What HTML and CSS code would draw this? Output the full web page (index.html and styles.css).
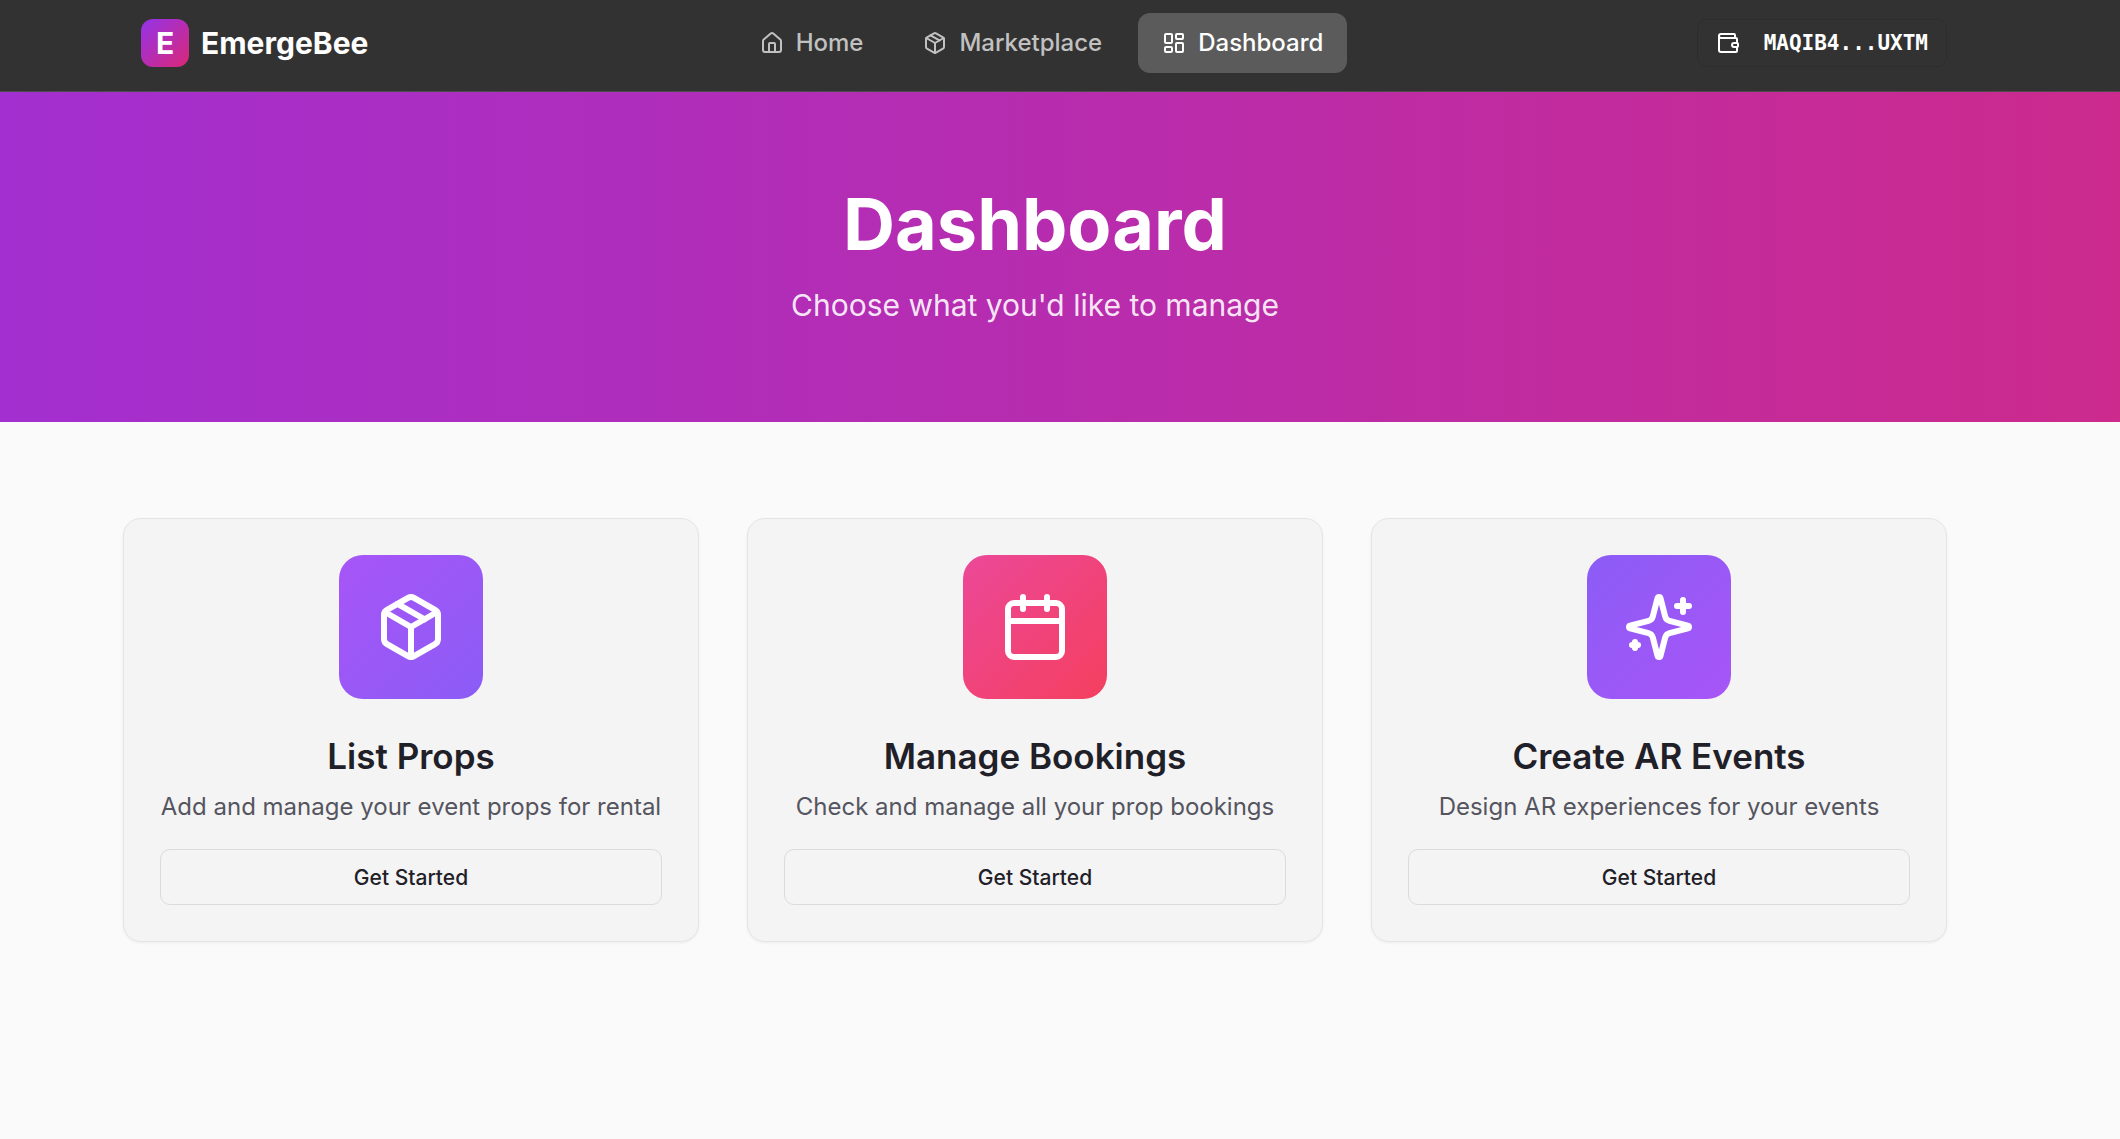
FILE: index.html
```html
<!DOCTYPE html>
<html lang="en">
<head>
<meta charset="utf-8">
<meta name="viewport" content="width=device-width, initial-scale=1">
<title>Dashboard - EmergeBee</title>
<link rel="stylesheet" href="styles.css">
</head>
<body>
<header class="site-header">
  <div class="container header-bar">
    <a class="brand" href="#">
      <span class="brand-mark">E</span>
      <span class="brand-name">EmergeBee</span>
    </a>
    <nav class="main-nav" aria-label="Main">
      <a class="nav-link" href="#">
        <svg class="icon" viewBox="0 0 24 24" aria-hidden="true"><path d="M15 21v-8a1 1 0 0 0-1-1h-4a1 1 0 0 0-1 1v8"/><path d="M3 10a2 2 0 0 1 .709-1.528l7-5.999a2 2 0 0 1 2.582 0l7 5.999A2 2 0 0 1 21 10v9a2 2 0 0 1-2 2H5a2 2 0 0 1-2-2z"/></svg>
        Home
      </a>
      <a class="nav-link" href="#">
        <svg class="icon" viewBox="0 0 24 24" aria-hidden="true"><path d="M11 21.73a2 2 0 0 0 2 0l7-4A2 2 0 0 0 21 16V8a2 2 0 0 0-1-1.73l-7-4a2 2 0 0 0-2 0l-7 4A2 2 0 0 0 3 8v8a2 2 0 0 0 1 1.73z"/><path d="M12 22V12"/><path d="M3.29 7 12 12l8.71-5"/><path d="m7.5 4.27 9 5.15"/></svg>
        Marketplace
      </a>
      <a class="nav-link nav-link-active" href="#" aria-current="page">
        <svg class="icon" viewBox="0 0 24 24" aria-hidden="true"><rect width="7" height="9" x="3" y="3" rx="1"/><rect width="7" height="5" x="14" y="3" rx="1"/><rect width="7" height="9" x="14" y="12" rx="1"/><rect width="7" height="5" x="3" y="16" rx="1"/></svg>
        Dashboard
      </a>
    </nav>
    <button class="wallet" type="button">
      <svg class="icon" viewBox="0 0 24 24" aria-hidden="true"><path d="M19 7V4a1 1 0 0 0-1-1H5a2 2 0 0 0 0 4h15a1 1 0 0 1 1 1v4h-3a2 2 0 0 0 0 4h3a1 1 0 0 0 1-1v-2a1 1 0 0 0-1-1"/><path d="M3 5v14a2 2 0 0 0 2 2h15a1 1 0 0 0 1-1v-4"/></svg>
      MAQIB4...UXTM
    </button>
  </div>
</header>
<main>
  <section class="hero">
    <h1 class="hero-title">Dashboard</h1>
    <p class="hero-text">Choose what you'd like to manage</p>
  </section>
  <section class="content">
    <div class="container card-grid">
      <article class="card">
        <div class="tile tile-props">
          <svg class="icon icon-large" viewBox="0 0 24 24" aria-hidden="true"><path d="M11 21.73a2 2 0 0 0 2 0l7-4A2 2 0 0 0 21 16V8a2 2 0 0 0-1-1.73l-7-4a2 2 0 0 0-2 0l-7 4A2 2 0 0 0 3 8v8a2 2 0 0 0 1 1.73z"/><path d="M12 22V12"/><path d="M3.29 7 12 12l8.71-5"/><path d="m7.5 4.27 9 5.15"/></svg>
        </div>
        <h2 class="card-title">List Props</h2>
        <p class="card-text">Add and manage your event props for rental</p>
        <button class="card-button" type="button">Get Started</button>
      </article>
      <article class="card">
        <div class="tile tile-bookings">
          <svg class="icon icon-large" viewBox="0 0 24 24" aria-hidden="true"><path d="M8 2v4"/><path d="M16 2v4"/><rect width="18" height="18" x="3" y="4" rx="2"/><path d="M3 10h18"/></svg>
        </div>
        <h2 class="card-title">Manage Bookings</h2>
        <p class="card-text">Check and manage all your prop bookings</p>
        <button class="card-button" type="button">Get Started</button>
      </article>
      <article class="card">
        <div class="tile tile-events">
          <svg class="icon icon-large" viewBox="0 0 24 24" aria-hidden="true"><path d="M9.937 15.5A2 2 0 0 0 8.5 14.063l-6.135-1.582a.5.5 0 0 1 0-.962L8.5 9.936A2 2 0 0 0 9.937 8.5l1.582-6.135a.5.5 0 0 1 .963 0L14.063 8.5A2 2 0 0 0 15.5 9.937l6.135 1.581a.5.5 0 0 1 0 .964L15.5 14.063a2 2 0 0 0-1.437 1.437l-1.582 6.135a.5.5 0 0 1-.963 0z"/><path d="M20 3v4"/><path d="M22 5h-4"/><path d="M4 17v2"/><path d="M5 18H3"/></svg>
        </div>
        <h2 class="card-title">Create AR Events</h2>
        <p class="card-text">Design AR experiences for your events</p>
        <button class="card-button" type="button">Get Started</button>
      </article>
    </div>
  </section>
</main>
</body>
</html>
```
FILE: styles.css
```css
:root {
  --page-end: 50px;
  --ink: #1f2028;
  --muted: #555560;
}

* {
  box-sizing: border-box;
}

body {
  margin: 0;
  background: #fafafa;
  color: var(--ink);
  font-family: Inter, sans-serif;
}

h1,
h2,
p {
  margin: 0;
}

a {
  color: inherit;
  text-decoration: none;
}

button {
  background: transparent;
  color: inherit;
  font: inherit;
  cursor: pointer;
}

.container {
  width: 100%;
  max-width: 1824px;
  margin: 0 auto;
}

.icon {
  flex: none;
  width: 24px;
  height: 24px;
  fill: none;
  stroke: currentColor;
  stroke-width: 2;
  stroke-linecap: round;
  stroke-linejoin: round;
}

.icon-large {
  width: 72px;
  height: 72px;
}

.site-header {
  padding: 13px var(--page-end) 18px 0;
  border-bottom: 1px solid #4b4b4b;
  background: #323232;
  color: #fff;
}

.header-bar {
  display: flex;
  align-items: center;
  justify-content: space-between;
}

.brand {
  display: flex;
  align-items: center;
  gap: 12px;
  padding: 0 18px;
  font-size: 30px;
  font-weight: 700;
  line-height: 48px;
}

.brand-mark {
  width: 48px;
  border-radius: 12px;
  background: linear-gradient(135deg, #9333ea, #db2777);
  text-align: center;
}

.main-nav {
  display: flex;
  gap: 12px;
}

.nav-link {
  display: flex;
  align-items: center;
  gap: 12px;
  padding: 0 24px;
  border-radius: 12px;
  color: #c1c1c1;
  font-size: 24px;
  font-weight: 500;
  line-height: 60px;
}

.nav-link-active {
  background: #5b5b5b;
  color: #fff;
}

.wallet {
  display: flex;
  align-items: center;
  gap: 24px;
  height: 48px;
  padding: 0 18px;
  border: 1px solid #2d2d2d;
  border-radius: 10px;
  font-family: "DejaVu Sans Mono", monospace;
  font-size: 21px;
  font-weight: 700;
}

.hero {
  padding: 96px var(--page-end) 96px 0;
  background: linear-gradient(90deg, #a32fd0, #cc2a8d);
  color: #fff;
  text-align: center;
}

.hero-title {
  font-size: 72px;
  font-weight: 700;
  line-height: 72px;
}

.hero-text {
  margin-top: 24px;
  color: rgb(255 255 255 / 90%);
  font-size: 30px;
  line-height: 42px;
}

.content {
  padding: 96px var(--page-end) 96px 0;
}

.card-grid {
  display: grid;
  grid-template-columns: repeat(auto-fit, minmax(480px, 1fr));
  gap: 48px;
}

.card {
  display: flex;
  flex-direction: column;
  align-items: center;
  padding: 36px;
  border: 1px solid #e5e5e5;
  border-radius: 18px;
  background: #f4f4f4;
  box-shadow: 0 1px 3px rgb(0 0 0 / 6%);
  text-align: center;
}

.tile {
  display: grid;
  place-items: center;
  width: 144px;
  height: 144px;
  border-radius: 24px;
  color: #fff;
}

.tile-props {
  background: linear-gradient(135deg, #a855f7, #8b5cf6);
}

.tile-bookings {
  background: linear-gradient(135deg, #ec4899, #f43f5e);
}

.tile-events {
  background: linear-gradient(135deg, #8b5cf6, #a855f7);
}

.card-title {
  margin-top: 36px;
  font-size: 35px;
  font-weight: 600;
  line-height: 42px;
}

.card-text {
  margin-top: 12px;
  color: var(--muted);
  font-size: 24px;
  line-height: 36px;
}

.card-button {
  width: 100%;
  height: 56px;
  margin-top: 24px;
  border: 1px solid #dbdbdb;
  border-radius: 10px;
  font-size: 21px;
  font-weight: 500;
}
```
